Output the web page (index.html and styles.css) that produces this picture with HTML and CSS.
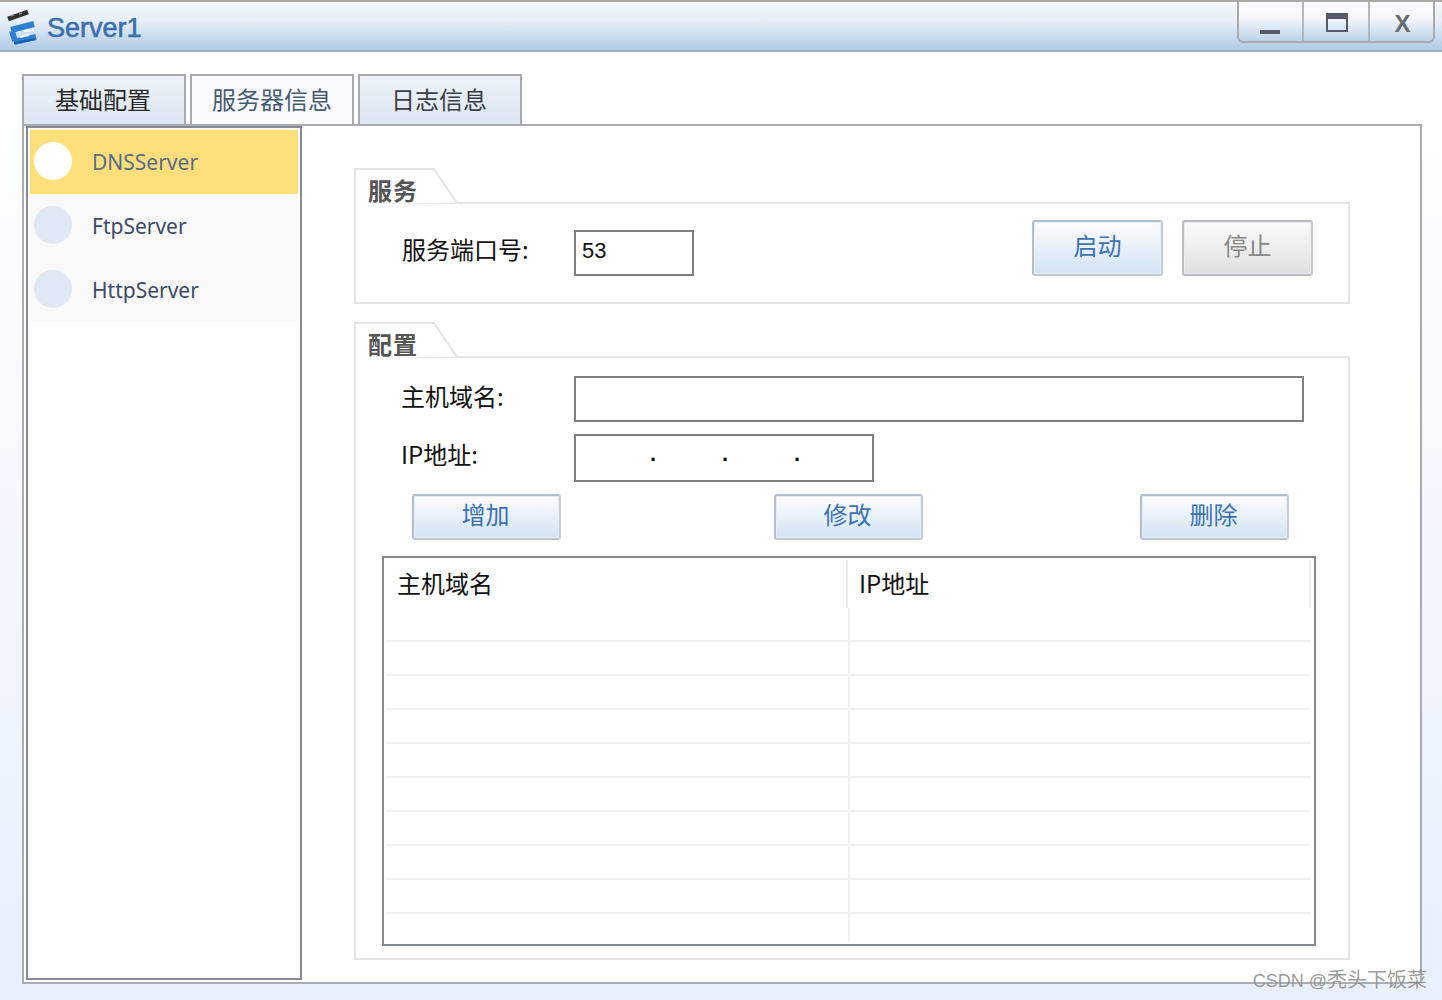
FILE: index.html
```html
<!DOCTYPE html>
<html lang="zh-CN">

<head>
    <meta charset="UTF-8">
    <meta name="viewport" content="width=device-width, initial-scale=1.0">
    <title>Server1</title>
    <link rel="stylesheet" href="styles.css">
</head>

<body>
    <div class="titlebar">
        <svg class="logo" width="32" height="38" viewBox="0 0 32 38">
            <path d="M2 12 L22 5" stroke="#333333" stroke-width="5" fill="none" />
            <path d="M5 9 L8 8 M13 7 L16 6" stroke="#8a8a8a" stroke-width="1.5" fill="none" />
            <path d="M5 23 L28 17 M6 24 L9 34 M8 35 L30 30" stroke="#2f80d4" stroke-width="6" fill="none" />
            <path d="M18 24 L28 23 M14 30 L23 28" stroke="#ffffff" stroke-width="2" fill="none" />
            <path d="M8 36 L29 32" stroke="#1a5da8" stroke-width="2" fill="none" />
        </svg>
        <span class="title">Server1</span>
        <div class="win_buttons">
            <div class="win_button win_min"><span class="icon_min"></span></div>
            <div class="win_button"><span class="icon_max"></span></div>
            <div class="win_button icon_close">X</div>
        </div>
    </div>

    <div class="page">
        <div class="tabs">
            <div class="tab tab_first">基础配置</div>
            <div class="tab tab_active">服务器信息</div>
            <div class="tab tab_log">日志信息</div>
        </div>

        <div class="panel">
            <div class="service_list">
                <div class="service selected"><span class="dot"></span>DNSServer</div>
                <div class="service"><span class="dot"></span>FtpServer</div>
                <div class="service"><span class="dot"></span>HttpServer</div>
            </div>

            <div class="content">
                <div class="group">
                    <div class="group_head">
                        <svg class="group_tab" width="106" height="36" viewBox="0 0 106 36">
                            <path d="M1 36 V1 H80 L103 35" fill="#fff" stroke="#e4e4e4" stroke-width="2" />
                        </svg>
                        <span class="group_title">服务</span>
                    </div>
                    <div class="group_body service_body">
                        <div class="form_label port_label">服务端口号:</div>
                        <input class="field port_field" type="text" value="53">
                        <div class="service_buttons">
                            <button class="btn btn_start">启动</button>
                            <button class="btn btn_stop">停止</button>
                        </div>
                    </div>
                </div>

                <div class="group">
                    <div class="group_head">
                        <svg class="group_tab" width="106" height="36" viewBox="0 0 106 36">
                            <path d="M1 36 V1 H80 L103 35" fill="#fff" stroke="#e4e4e4" stroke-width="2" />
                        </svg>
                        <span class="group_title">配置</span>
                    </div>
                    <div class="group_body config_body">
                        <div class="form_row">
                            <div class="form_label">主机域名:</div>
                            <input class="field host_field" type="text">
                        </div>
                        <div class="form_row">
                            <div class="form_label">IP地址:</div>
                            <div class="field ip_field">
                                <span>.</span><span>.</span><span>.</span>
                            </div>
                        </div>
                        <div class="action_row">
                            <button class="btn btn_small">增加</button>
                            <button class="btn btn_small btn_edit">修改</button>
                            <button class="btn btn_small btn_delete">删除</button>
                        </div>
                        <div class="grid">
                            <div class="grid_head">
                                <div class="head_cell">主机域名</div>
                                <div class="head_cell">IP地址</div>
                            </div>
                            <div class="grid_row"><div></div><div></div></div>
                            <div class="grid_row"><div></div><div></div></div>
                            <div class="grid_row"><div></div><div></div></div>
                            <div class="grid_row"><div></div><div></div></div>
                            <div class="grid_row"><div></div><div></div></div>
                            <div class="grid_row"><div></div><div></div></div>
                            <div class="grid_row"><div></div><div></div></div>
                            <div class="grid_row"><div></div><div></div></div>
                            <div class="grid_row"><div></div><div></div></div>
                            <div class="grid_row last"><div></div><div></div></div>
                        </div>
                    </div>
                </div>
            </div>
        </div>
    </div>

    <div class="watermark"><span class="watermark_latin">CSDN @</span>秃头下饭菜</div>
</body>

</html>
```

FILE: styles.css
```css
* {
    box-sizing: border-box;
}

body,
html {
    margin: 0;
    padding: 0;
    height: 100%;
    width: 100%;
    overflow: hidden;
}

body {
    position: relative;
    font-family: "Noto Sans CJK SC", "Liberation Sans", sans-serif;
    font-size: 24px;
    color: #111111;
    background: linear-gradient(#ffffff 60px, #e8f0fd 100%);
}

.titlebar {
    display: flex;
    align-items: flex-start;
    height: 52px;
    padding-left: 6px;
    border-top: 2px solid #a9a9a9;
    border-bottom: 2px solid #a4aeb8;
    background: linear-gradient(#f4f7fc, #e6eef8 40%, #afcbe5);
}

.logo {
    margin-top: 5px;
}

.title {
    margin-left: 9px;
    margin-top: 11px;
    font-family: "Liberation Sans", sans-serif;
    font-size: 27px;
    line-height: 30px;
    color: #3a70ae;
    -webkit-text-stroke: 0.6px #3a70ae;
}

.win_buttons {
    display: flex;
    margin-left: auto;
    margin-right: 7px;
    height: 41px;
    border: 2px solid #a9a9a9;
    border-top: none;
    border-radius: 0 0 6px 6px;
    background: linear-gradient(#fbfcfe, #f4f7fb 40%, #bcd3e9);
}

.win_button {
    display: flex;
    align-items: center;
    justify-content: center;
    width: 66px;
    border-right: 2px solid #b4b8bd;
}

.win_min {
    width: 65px;
}

.win_button:last-child {
    width: 63px;
    border-right: none;
}

.icon_min {
    width: 20px;
    height: 4px;
    margin-top: 20px;
    margin-right: 2px;
    background-color: #565a66;
}

.icon_max {
    width: 22px;
    height: 19px;
    margin-top: 2px;
    margin-left: 2px;
    border: 2px solid #565a66;
    border-top-width: 6px;
}

.icon_close {
    padding-top: 5px;
    padding-left: 2px;
    font-family: "Liberation Sans", sans-serif;
    font-size: 24px;
    font-weight: bold;
    color: #666a72;
}

.page {
    padding: 22px 20px 0 22px;
}

.tabs {
    display: flex;
    gap: 4px;
}

.tab {
    width: 164px;
    height: 50px;
    border: 2px solid #a8acb2;
    border-bottom: none;
    text-align: center;
    line-height: 46px;
    background: linear-gradient(#eef3fa, #dce5f0);
}

.tab_first {
    padding-right: 2px;
    color: #2a2a2a;
}

.tab_active {
    color: #465a72;
    background: #f8fafd;
}

.tab_log {
    padding-right: 2px;
    color: #3a3f48;
}

.panel {
    display: flex;
    height: 860px;
    padding: 0 0 2px 2px;
    border: 2px solid #a9adb1;
    background-color: #ffffff;
}

.service_list {
    width: 276px;
    padding: 2px;
    border: 2px solid #858a93;
    background-color: #ffffff;
}

.service {
    display: flex;
    align-items: center;
    height: 64px;
    padding-left: 4px;
    font-family: "Noto Sans", sans-serif;
    font-size: 21px;
    color: #3d4a66;
    background-color: #f9f9f9;
}

.service.selected {
    color: #5a6b85;
    background-color: #fedf7c;
}

.dot {
    flex: none;
    width: 38px;
    height: 38px;
    margin-right: 20px;
    margin-top: -2px;
    border-radius: 50%;
    background-color: #dfe8f3;
}

.selected .dot {
    background-color: #ffffff;
}

.content {
    width: 996px;
    margin-left: 52px;
    padding-top: 42px;
}

.group_head {
    position: relative;
    height: 34px;
}

.group_tab {
    position: absolute;
    left: 0;
    top: 0;
}

.group_title {
    position: relative;
    display: block;
    padding-left: 14px;
    font-size: 24px;
    letter-spacing: 1px;
    line-height: 44px;
    height: 34px;
    font-weight: bold;
    color: #555555;
}

.group_body {
    border: 2px solid #e4e4e4;
}

.service_body {
    display: flex;
    align-items: flex-start;
    height: 102px;
    margin-bottom: 18px;
    padding: 16px 35px 0 46px;
}

.form_label {
    width: 172px;
    line-height: 46px;
    height: 46px;
}

.port_label {
    margin-top: 6px;
}

.field {
    height: 46px;
    padding: 0 6px;
    border: 2px solid #7f7f7f;
    border-radius: 0;
    outline: none;
    font-family: "Liberation Sans", sans-serif;
    font-size: 22px;
    color: #111111;
    background-color: #ffffff;
}

.port_field {
    width: 120px;
    margin-top: 10px;
    padding-bottom: 4px;
}

.service_buttons {
    display: flex;
    gap: 19px;
    margin-left: auto;
}

.btn {
    width: 131px;
    height: 56px;
    padding: 0 0 7px 0;
    border: 2px solid #b1bfce;
    border-right-color: #c4ced9;
    border-bottom-color: #bcc8d5;
    border-radius: 3px;
    box-shadow: inset 0 0 0 1px #e8edf3;
    font-family: "Noto Sans CJK SC", "Liberation Sans", sans-serif;
    font-size: 24px;
    color: #3b72b3;
    background: linear-gradient(#fcfdfe, #d2e3f3);
}

.btn_stop {
    border-color: #bcbcbc;
    border-right-color: #cacaca;
    color: #888888;
    background: linear-gradient(#fbfbfb, #dfdfdf);
}

.btn_small {
    width: 149px;
    height: 46px;
    padding: 0 2px 8px 0;
}

.btn_edit {
    margin-left: 213px;
}

.btn_delete {
    margin-left: 217px;
}

.config_body {
    display: flex;
    flex-direction: column;
    height: 604px;
    padding: 18px 0 0;
}

.form_row {
    display: flex;
    padding-left: 45px;
    margin-bottom: 12px;
}

.form_row .form_label {
    width: 173px;
    line-height: 40px;
}

.host_field {
    width: 730px;
}

.ip_field {
    display: flex;
    justify-content: center;
    width: 300px;
    height: 48px;
    padding: 0 0 0 2px;
    line-height: 36px;
    font-weight: bold;
}

.ip_field span {
    width: 72px;
    text-align: center;
}

.action_row {
    display: flex;
    padding-left: 56px;
    margin-bottom: 16px;
}

.grid {
    width: 934px;
    height: 390px;
    margin-left: 26px;
    padding: 2px 3px 2px 2px;
    border: 2px solid #858a93;
}

.grid_head {
    display: grid;
    grid-template-columns: 462px 463px;
    height: 48px;
}

.head_cell {
    padding-left: 11px;
    line-height: 46px;
    border-right: 2px solid #ececec;
}

.grid_row {
    display: grid;
    grid-template-columns: 464px 461px;
    height: 34px;
    border-bottom: 2px solid #f0f0f0;
}

.grid_row div:first-child {
    border-right: 2px solid #f0f0f0;
}

.grid_row.last {
    height: 28px;
    border-bottom: none;
}

.watermark {
    position: absolute;
    right: 15px;
    bottom: 6px;
    font-size: 20px;
    line-height: 26px;
    color: rgba(110, 110, 110, 0.7);
    text-shadow: 0 1px 1px rgba(255, 255, 255, 0.6);
}

.watermark_latin {
    font-family: "Liberation Sans", sans-serif;
    font-size: 18px;
}
```
